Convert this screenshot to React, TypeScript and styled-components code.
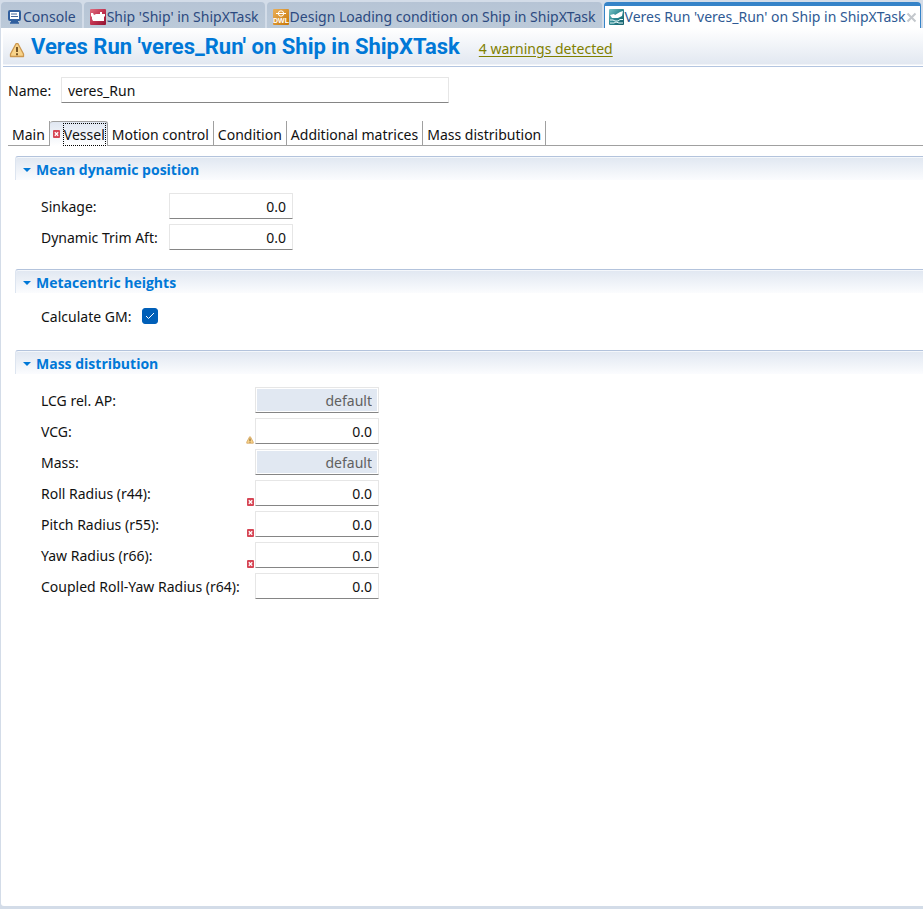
import React, { useState } from "react";
import styled, { createGlobalStyle, css } from "styled-components";

const GlobalStyle = createGlobalStyle`
  *, *::before, *::after { box-sizing: border-box; }
  body {
    margin: 0;
    background: #d3dce8;
    color: #111;
    font: 14px/20px "Noto Sans", "Open Sans", sans-serif;
  }
  button, input { font: inherit; color: inherit; }
`;

const Window = styled.div`
  display: flex;
  flex-direction: column;
  min-height: 100vh;
  padding: 2px 0 3px 1px;
  overflow: hidden;
`;

const EditorTabs = styled.div`
  display: flex;
  gap: 2px;
  height: 26px;
  padding-right: 2px;
`;

const EditorTab = styled.button<{ $active?: boolean }>`
  display: flex;
  align-items: center;
  flex: none;
  gap: 1px;
  height: 26px;
  padding: 3px 6px 0 6px;
  border: 0;
  border-radius: 4px 4px 0 0;
  background: linear-gradient(#b6c4d5, #bccad9);
  color: #2c4a80;
  white-space: nowrap;
  ${(p) =>
    p.$active &&
    css`
      padding: 0 3px 0 4px;
      border: solid #3583c8;
      border-width: 4px 1px 0;
      background: #fff;
      color: #2f5a94;
    `}
`;

const Editor = styled.main`
  flex: 1;
  background: #fff;
  border-radius: 0 0 0 3px;
`;

const TitleBar = styled.header`
  display: flex;
  align-items: center;
  height: 39px;
  margin-left: 2px;
  padding-left: 6px;
  border-bottom: 1px solid #b3c5e0;
  background: linear-gradient(#ffffff, #e2e8f1 36px, #ffffff 37px);
  & > svg { flex: none; margin-top: 5px; }
`;

const Title = styled.h1`
  margin: 0 19px 0 6px;
  color: #0078d7;
  font: bold 22px/24px Roboto, "Liberation Sans", sans-serif;
  white-space: nowrap;
`;

const WarningLink = styled.a`
  padding-top: 3px;
  color: #808000;
  text-underline-offset: 2px;
  white-space: nowrap;
`;

const NameRow = styled.div`
  display: grid;
  grid-template-columns: 53px 388px;
  align-items: center;
  padding: 10px 0 18px 7px;
`;

const Field = styled.input<{ $numeric?: boolean }>`
  width: 100%;
  height: 26px;
  padding: 0 6px;
  border: 1px solid #e6e6e6;
  border-bottom-color: #858585;
  border-radius: 1px;
  background: #fff;
  text-align: ${(p) => (p.$numeric ? "right" : "left")};
  &:disabled {
    box-shadow: inset 0 0 0 1px #fff;
    background: #e1e8f2;
    color: #606060;
  }
  &:focus { outline: none; }
`;

const PageTabs = styled.div`
  display: flex;
  height: 25px;
  margin-left: 7px;
  border-bottom: 1px solid #a0a0a0;
`;

const PageTab = styled.button<{ $active?: boolean }>`
  display: flex;
  align-items: center;
  flex: none;
  height: 24px;
  padding: 3px 4px 0 4px;
  border: 0;
  border-right: 1px solid #a0a0a0;
  background: #fff;
  white-space: nowrap;
  ${(p) =>
    p.$active &&
    css`
      gap: 3px;
      height: 25px;
      padding: 0 1px 0 3px;
      border: 1px solid #a0a0a0;
      border-left: 0;
      border-bottom: 0;
      border-radius: 3px 3px 0 0;
      background: linear-gradient(#e0e7f2, #ffffff);
    `}
`;

const FocusLabel = styled.span`
  height: 23px;
  padding-top: 1px;
  border: 1px dotted #000;
  line-height: 20px;
`;

const Sections = styled.div`
  padding: 10px 0 0 14px;
`;

const Section = styled.section`
  margin-bottom: 19px;
`;

const SectionTitle = styled.h2`
  display: flex;
  height: 24px;
  margin: 0;
  border-top: 1px solid #b3c3dc;
  border-left: 1px solid #dde5f0;
  border-top-left-radius: 3px;
  background: linear-gradient(#e0e7f1, #fbfcfe);
  box-shadow: inset 0 1px #f4f7fb;
  font-size: 14px;
  font-family: "Open Sans", "Noto Sans", sans-serif;
`;

const Toggle = styled.button`
  display: flex;
  align-items: center;
  gap: 5px;
  padding: 3px 0 0 7px;
  border: 0;
  background: none;
  color: #0078d7;
  font-weight: bold;
`;

const Rows = styled.div<{ $label: number; $top: number; $bottom?: number }>`
  display: grid;
  grid-template-columns: ${(p) => p.$label}px 124px;
  grid-auto-rows: 26px;
  row-gap: 5px;
  align-items: center;
  padding: ${(p) => p.$top}px 0 ${(p) => p.$bottom ?? 0}px 26px;
`;

const Label = styled.label`
  padding-top: 1px;
  white-space: nowrap;
`;

const LabelCell = styled.div`
  display: flex;
  height: 26px;
  align-items: center;
  justify-content: space-between;
  padding-right: 1px;
  & > svg { align-self: flex-end; }
`;

const Check = styled.input`
  appearance: none;
  width: 16px;
  height: 16px;
  margin: 0;
  border: 1px solid #777;
  border-radius: 3px;
  background: #fff;
  grid-area: 1 / 1;
  &:checked { background: #005fb8; border-color: #005fb8; }
`;

const CheckBox = styled.span`
  display: grid;
  width: 16px;
  place-items: center;
  & > svg { grid-area: 1 / 1; pointer-events: none; }
`;

const ConsoleIcon = () => (
  <svg width="15" height="16" viewBox="0 0 15 16" aria-hidden="true">
    <rect x="2" y="2" width="11" height="9" rx="1" fill="#fff" stroke="#315f9e" strokeWidth="2" />
    <path d="M4 5h6M4 7.500h7" stroke="#46689b" />
    <path d="M4 12.500h7M3 14h9" stroke="#315f9e" strokeWidth="1.500" />
  </svg>
);

const ShipIcon = () => (
  <svg width="16" height="16" viewBox="0 0 16 16" aria-hidden="true">
    <defs>
      <linearGradient id="shipRed" x2="1" y2="1">
        <stop stopColor="#df6f80" />
        <stop offset="0.5" stopColor="#c23350" />
        <stop offset="1" stopColor="#8f1230" />
      </linearGradient>
    </defs>
    <rect width="16" height="16" rx="1" fill="url(#shipRed)" />
    <path d="M1 4h2l1 2 2-1h4V3h2v2h3v2l-1 1v4H3l-1-2V8L1 7z" fill="#fff" />
  </svg>
);

const LoadIcon = () => (
  <svg width="16" height="16" viewBox="0 0 16 16" aria-hidden="true">
    <defs>
      <linearGradient id="loadOrange" x2="1" y2="1">
        <stop stopColor="#eab05a" />
        <stop offset="1" stopColor="#c87505" />
      </linearGradient>
    </defs>
    <rect width="16" height="16" rx="1" fill="url(#loadOrange)" />
    <circle cx="8" cy="4.500" r="2.700" fill="none" stroke="#fff" />
    <path d="M3 4.500h10" stroke="#fff" />
    <text x="8" y="14" textAnchor="middle" fill="#fff" fontFamily="Liberation Sans, sans-serif" fontSize="7" fontWeight="bold">DWL</text>
  </svg>
);

const RunIcon = () => (
  <svg width="15" height="16" viewBox="0 0 15 16" aria-hidden="true">
    <defs>
      <linearGradient id="runTeal" x2="1" y2="1">
        <stop stopColor="#79c5c8" />
        <stop offset="0.5" stopColor="#2c8791" />
        <stop offset="1" stopColor="#155c68" />
      </linearGradient>
    </defs>
    <rect width="15" height="16" rx="1" fill="url(#runTeal)" />
    <path d="M1 6l4-1 1 1 5-3 3-1-1 5-4 2H3z" fill="#fff" />
    <path d="M1 11h3l2 1h3l2-1.500h3M1 14h4l2-1 3 1h4" fill="none" stroke="#e9fafa" />
  </svg>
);

const CloseIcon = () => (
  <svg width="11" height="11" viewBox="0 0 11 11" aria-hidden="true">
    <path d="M1.500 1.500l8 8M9.500 1.500l-8 8" stroke="#c3c7cc" strokeWidth="2" />
  </svg>
);

const WarningIcon = ({ size }: { size: number }) => (
  <svg width={size} height={size} viewBox="0 0 16 16" aria-hidden="true">
    <path d="M7 1.700h2l5.500 10.300v2.500h-13V12z" fill="#f8d38a" stroke="#cc974e" strokeWidth="1.300" strokeLinejoin="round" />
    <path d="M8 5v5M8 11.300v1.900" stroke="#6b4a1c" strokeWidth="1.800" />
  </svg>
);

const ErrorIcon = () => (
  <svg width="7" height="8" viewBox="0 0 7 8" aria-hidden="true">
    <rect width="7" height="8" rx="1" fill="#d64554" />
    <path d="M1.800 2.200l3.400 3.600M5.200 2.200L1.800 5.800" stroke="#fff" strokeWidth="1.300" />
  </svg>
);

const Twistie = ({ open }: { open: boolean }) => (
  <svg width="8" height="8" viewBox="0 0 8 8" aria-hidden="true">
    <path d={open ? "M0 2h8L4 6z" : "M2 0v8l4-4z"} fill="#0078d7" />
  </svg>
);

type Entry = { id: string; label: string; value: string; disabled?: boolean; status?: "warning" | "error" };

const position: Entry[] = [
  { id: "sinkage", label: "Sinkage:", value: "0.0" },
  { id: "trim", label: "Dynamic Trim Aft:", value: "0.0" },
];

const mass: Entry[] = [
  { id: "lcg", label: "LCG rel. AP:", value: "default", disabled: true },
  { id: "vcg", label: "VCG:", value: "0.0", status: "warning" },
  { id: "mass", label: "Mass:", value: "default", disabled: true },
  { id: "r44", label: "Roll Radius (r44):", value: "0.0", status: "error" },
  { id: "r55", label: "Pitch Radius (r55):", value: "0.0", status: "error" },
  { id: "r66", label: "Yaw Radius (r66):", value: "0.0", status: "error" },
  { id: "r64", label: "Coupled Roll-Yaw Radius (r64):", value: "0.0" },
];

const FieldRows = ({ entries, label }: { entries: Entry[]; label: number }) => (
  <Rows $label={label} $top={13}>
    {entries.map((e) => (
      <React.Fragment key={e.id}>
        <LabelCell>
          <Label htmlFor={e.id}>{e.label}</Label>
          {e.status === "warning" && <WarningIcon size={8} />}
          {e.status === "error" && <ErrorIcon />}
        </LabelCell>
        <Field id={e.id} defaultValue={e.value} disabled={e.disabled} $numeric />
      </React.Fragment>
    ))}
  </Rows>
);

const Panel = ({ title, children }: { title: string; children: React.ReactNode }) => {
  const [open, setOpen] = useState(true);
  return (
    <Section>
      <SectionTitle>
        <Toggle aria-expanded={open} onClick={() => setOpen(!open)}>
          <Twistie open={open} />
          {title}
        </Toggle>
      </SectionTitle>
      {open && children}
    </Section>
  );
};

export default function App() {
  return (
    <Window>
      <GlobalStyle />
      <EditorTabs role="tablist">
        <EditorTab role="tab"><ConsoleIcon />Console</EditorTab>
        <EditorTab role="tab"><ShipIcon />Ship 'Ship' in ShipXTask</EditorTab>
        <EditorTab role="tab"><LoadIcon />Design Loading condition on Ship in ShipXTask</EditorTab>
        <EditorTab role="tab" aria-selected $active>
          <RunIcon />Veres Run 'veres_Run' on Ship in ShipXTask<CloseIcon />
        </EditorTab>
      </EditorTabs>
      <Editor>
        <TitleBar>
          <WarningIcon size={16} />
          <Title>Veres Run 'veres_Run' on Ship in ShipXTask</Title>
          <WarningLink href="#warnings">4 warnings detected</WarningLink>
        </TitleBar>
        <NameRow>
          <Label htmlFor="name">Name:</Label>
          <Field id="name" defaultValue="veres_Run" />
        </NameRow>
        <PageTabs role="tablist">
          <PageTab role="tab">Main</PageTab>
          <PageTab role="tab" aria-selected $active><ErrorIcon /><FocusLabel>Vessel</FocusLabel></PageTab>
          <PageTab role="tab">Motion control</PageTab>
          <PageTab role="tab">Condition</PageTab>
          <PageTab role="tab">Additional matrices</PageTab>
          <PageTab role="tab">Mass distribution</PageTab>
        </PageTabs>
        <Sections>
          <Panel title="Mean dynamic position">
            <FieldRows entries={position} label={128} />
          </Panel>
          <Panel title="Metacentric heights">
            <Rows $label={101} $top={10} $bottom={2}>
              <Label htmlFor="gm">Calculate GM:</Label>
              <CheckBox>
                <Check id="gm" type="checkbox" defaultChecked />
                <svg width="10" height="8" viewBox="0 0 10 8" aria-hidden="true">
                  <path d="M1 4l2.500 2.500L9 1" fill="none" stroke="#fff" />
                </svg>
              </CheckBox>
            </Rows>
          </Panel>
          <Panel title="Mass distribution">
            <FieldRows entries={mass} label={214} />
          </Panel>
        </Sections>
      </Editor>
    </Window>
  );
}
